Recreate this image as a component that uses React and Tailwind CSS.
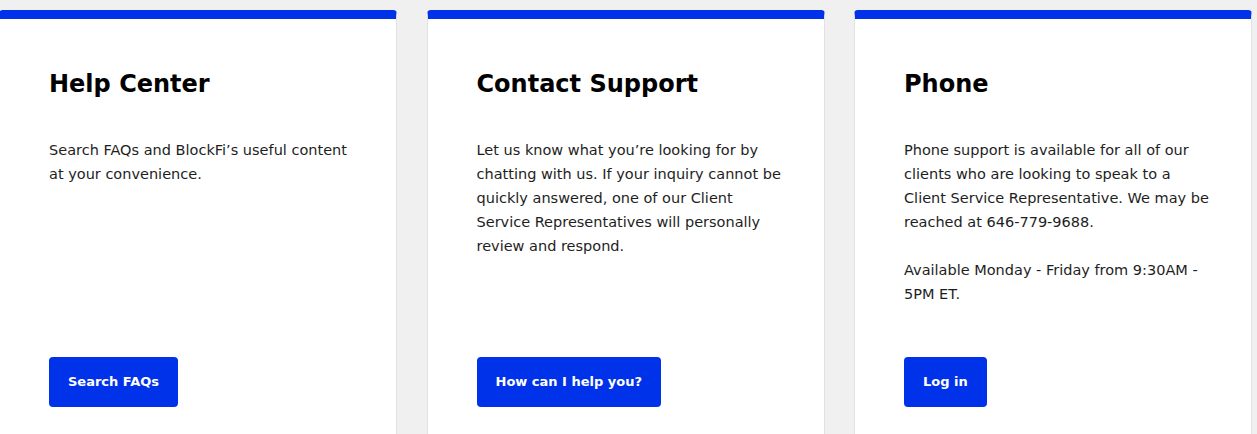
export default function App() {
  const cards = [
    {
      title: "Help Center",
      body: ["Search FAQs and BlockFi’s useful content at your convenience."],
      button: "Search FAQs",
    },
    {
      title: "Contact Support",
      body: [
        "Let us know what you’re looking for by chatting with us. If your inquiry cannot be quickly answered, one of our Client Service Representatives will personally review and respond.",
      ],
      button: "How can I help you?",
    },
    {
      title: "Phone",
      body: [
        "Phone support is available for all of our clients who are looking to speak to a Client Service Representative. We may be reached at 646-779-9688.",
        "Available Monday - Friday from 9:30AM - 5PM ET.",
      ],
      button: "Log in",
    },
  ];

  return (
    <div className="min-h-screen bg-[#f0f0f0] pt-[10px] font-['DejaVu_Sans',sans-serif]">
      <div className="flex gap-[29.5px] -ml-px">
        {cards.map((card) => (
          <div
            key={card.title}
            className="w-[398px] shrink-0 flex flex-col bg-white border-x border-[#e2e2e2] border-t-[9px] border-t-[#0032ea] rounded-t-[4px] pl-[49px] pr-[40px] pt-[46px] pb-[50px] h-[447px]"
          >
            <h2 className="text-[24px] leading-[38px] font-bold text-black">
              {card.title}
            </h2>
            <div className="mt-[35px] text-[14.5px] leading-[24px] text-[#1e1e1e]">
              {card.body.map((p, i) => (
                <p key={i} className="mb-[24px]">
                  {p}
                </p>
              ))}
            </div>
            <div className="mt-auto">
              <button className="h-[50px] px-[19px] rounded-[4px] bg-[#0032ea] text-white text-[13px] font-bold">
                {card.button}
              </button>
            </div>
          </div>
        ))}
      </div>
    </div>
  );
}
